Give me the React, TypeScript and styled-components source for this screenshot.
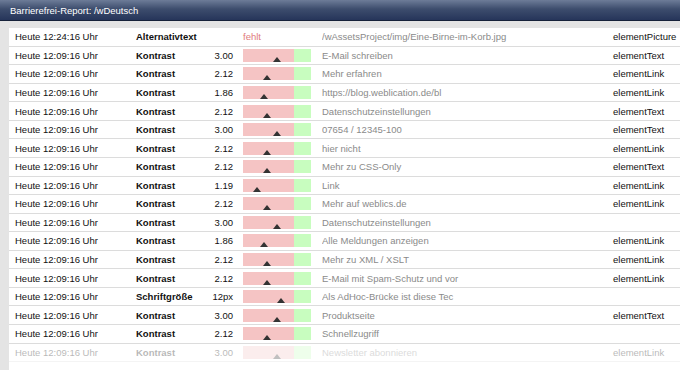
import React from "react";
import styled, { createGlobalStyle } from "styled-components";

const Global = createGlobalStyle`
  html, body { margin: 0; padding: 0; }
  body {
    width: 680px;
    height: 370px;
    overflow: hidden;
    background: #e4e4e4;
    font-family: "Liberation Sans", Arial, Helvetica, sans-serif;
    font-size: 9.5px;
    color: #111;
  }
`;

const Page = styled.div`
  display: flex;
  flex-direction: column;
  width: 680px;
  height: 370px;
  overflow: hidden;
`;

const TitleBar = styled.div`
  height: 20px;
  flex: 0 0 20px;
  display: flex;
  align-items: center;
  padding-left: 10px;
  color: #ffffff;
  font-size: 9.5px;
  background: linear-gradient(to bottom, #6d7c98 0%, #3d4d6d 45%, #26355a 100%);
  border-bottom: 1px solid #17223a;
`;

const Body = styled.div`
  flex: 1;
  padding: 7px 0 0 9px;
  overflow: hidden;
`;

const Table = styled.div`
  background: #ffffff;
  width: 680px;
  min-height: 360px;
  display: flex;
  flex-direction: column;
`;

const Row = styled.div<{ $faded?: boolean }>`
  display: grid;
  grid-template-columns: 121px 70px 27px 89px 291px 1fr;
  align-items: center;
  height: 18.57px;
  box-sizing: border-box;
  border-bottom: 1px solid #dcdcdc;
  padding-left: 6px;
  opacity: ${(p) => (p.$faded ? 0.3 : 1)};
`;

const DateCell = styled.div`
  white-space: nowrap;
  color: #111;
`;

const TypeCell = styled.div`
  font-weight: bold;
  white-space: nowrap;
  color: #111;
`;

const ValueCell = styled.div`
  text-align: right;
  white-space: nowrap;
  color: #111;
`;

const BarCell = styled.div`
  padding-left: 10px;
  display: flex;
  align-items: center;
`;

const Missing = styled.span`
  color: #e07b7b;
`;

const Bar = styled.div`
  position: relative;
  display: flex;
  width: 68px;
  height: 13px;
`;

const BarBad = styled.div`
  width: 51px;
  height: 100%;
  background: #f5c4c4;
`;

const BarGood = styled.div`
  flex: 1;
  height: 100%;
  background: #c8fdbf;
`;

const Marker = styled.div`
  position: absolute;
  bottom: 0;
  width: 0;
  height: 0;
  margin-left: -4px;
  border-left: 4px solid transparent;
  border-right: 4px solid transparent;
  border-bottom: 5px solid #333333;
`;

const TextCell = styled.div`
  color: #8a8a8a;
  white-space: nowrap;
  overflow: hidden;
`;

const ElemCell = styled.div`
  color: #111;
  white-space: nowrap;
`;

type Item = {
  date: string;
  type: string;
  value?: string;
  pos?: number;
  text: string;
  elem?: string;
  missing?: boolean;
  faded?: boolean;
};

const T = "Heute 12:09:16 Uhr";
const c = (v: number) => 0.5 + 11 * v;

const rows: Item[] = [
  { date: "Heute 12:24:16 Uhr", type: "Alternativtext", missing: true, text: "/wAssetsProject/img/Eine-Birne-im-Korb.jpg", elem: "elementPicture" },
  { date: T, type: "Kontrast", value: "3.00", pos: c(3), text: "E-Mail schreiben", elem: "elementText" },
  { date: T, type: "Kontrast", value: "2.12", pos: c(2.12), text: "Mehr erfahren", elem: "elementLink" },
  { date: T, type: "Kontrast", value: "1.86", pos: c(1.86), text: "https://blog.weblication.de/bl", elem: "elementLink" },
  { date: T, type: "Kontrast", value: "2.12", pos: c(2.12), text: "Datenschutzeinstellungen", elem: "elementText" },
  { date: T, type: "Kontrast", value: "3.00", pos: c(3), text: "07654 / 12345-100", elem: "elementText" },
  { date: T, type: "Kontrast", value: "2.12", pos: c(2.12), text: "hier nicht", elem: "elementLink" },
  { date: T, type: "Kontrast", value: "2.12", pos: c(2.12), text: "Mehr zu CSS-Only", elem: "elementText" },
  { date: T, type: "Kontrast", value: "1.19", pos: c(1.19), text: "Link", elem: "elementLink" },
  { date: T, type: "Kontrast", value: "2.12", pos: c(2.12), text: "Mehr auf weblics.de", elem: "elementLink" },
  { date: T, type: "Kontrast", value: "3.00", pos: c(3), text: "Datenschutzeinstellungen" },
  { date: T, type: "Kontrast", value: "1.86", pos: c(1.86), text: "Alle Meldungen anzeigen", elem: "elementLink" },
  { date: T, type: "Kontrast", value: "2.12", pos: c(2.12), text: "Mehr zu XML / XSLT", elem: "elementLink" },
  { date: T, type: "Kontrast", value: "2.12", pos: c(2.12), text: "E-Mail mit Spam-Schutz und vor", elem: "elementLink" },
  { date: T, type: "Schriftgröße", value: "12px", pos: 38, text: "Als AdHoc-Brücke ist diese Tec" },
  { date: T, type: "Kontrast", value: "3.00", pos: c(3), text: "Produktseite", elem: "elementText" },
  { date: T, type: "Kontrast", value: "2.12", pos: c(2.12), text: "Schnellzugriff" },
  { date: T, type: "Kontrast", value: "3.00", pos: c(3), text: "Newsletter abonnieren", elem: "elementLink", faded: true },
];

export default function App() {
  return (
    <Page>
      <Global />
      <TitleBar>Barrierefrei-Report: /wDeutsch</TitleBar>
      <Body>
        <Table>
          {rows.map((r, i) => (
            <Row key={i} $faded={r.faded}>
              <DateCell>{r.date}</DateCell>
              <TypeCell>{r.type}</TypeCell>
              <ValueCell>{r.value ?? ""}</ValueCell>
              <BarCell>
                {r.missing ? (
                  <Missing>fehlt</Missing>
                ) : (
                  <Bar>
                    <BarBad />
                    <BarGood />
                    <Marker style={{ left: `${r.pos}px` }} />
                  </Bar>
                )}
              </BarCell>
              <TextCell>{r.text}</TextCell>
              <ElemCell>{r.elem ?? ""}</ElemCell>
            </Row>
          ))}
        </Table>
      </Body>
    </Page>
  );
}
